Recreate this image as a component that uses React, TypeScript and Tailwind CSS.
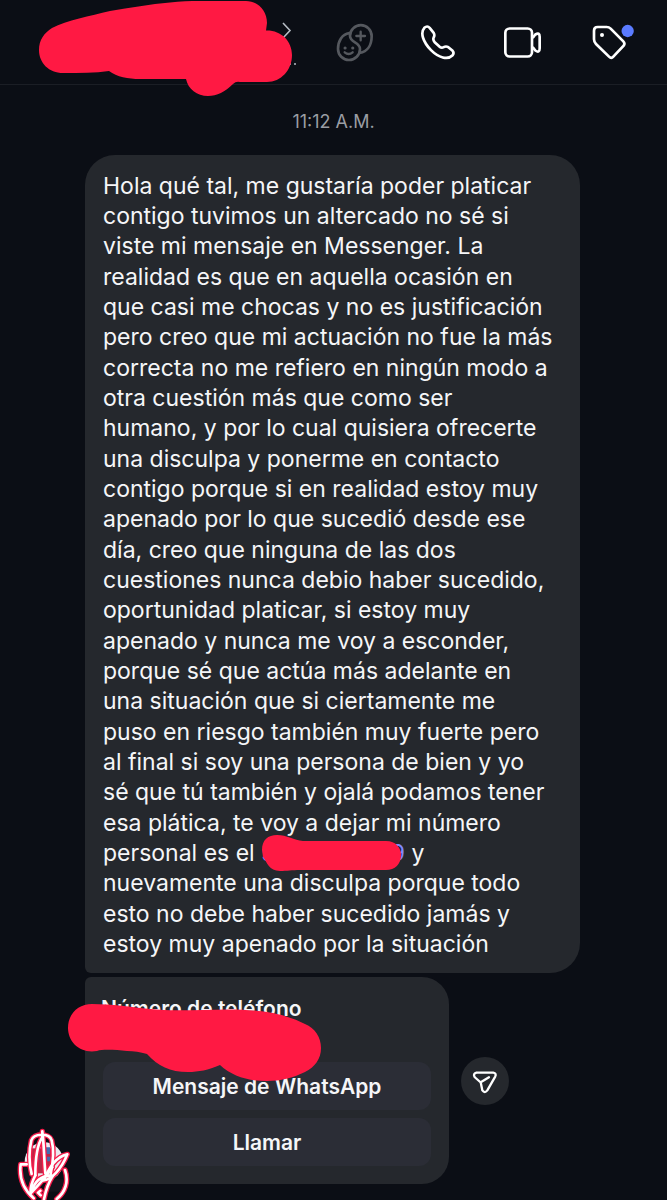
import React from "react";

const messageLines: React.ReactNode[][] = [
  ["Hola qué tal, me gustaría poder platicar", "contigo tuvimos un altercado no sé si", "viste mi mensaje en Messenger. La"],
  ["realidad es que en aquella ocasión en", "que casi me chocas y no es justificación", "pero creo que mi actuación no fue la más"],
  ["correcta no me refiero en ningún modo a", "otra cuestión más que como ser", "humano, y por lo cual quisiera ofrecerte"],
  ["una disculpa y ponerme en contacto", "contigo porque si en realidad estoy muy", "apenado por lo que sucedió desde ese"],
  ["día, creo que ninguna de las dos", "cuestiones nunca debio haber sucedido,", "oportunidad platicar, si estoy muy"],
  ["apenado y nunca me voy a esconder,", "porque sé que actúa más adelante en", "una situación que si ciertamente me"],
  ["puso en riesgo también muy fuerte pero", "al final si soy una persona de bien y yo", "sé que tú también y ojalá podamos tener"],
  ["esa plática, te voy a dejar mi número", <>personal es el <HiddenNumber /> y</>, "nuevamente una disculpa porque todo"],
  ["esto no debe haber sucedido jamás y", "estoy muy apenado por la situación"],
];

function HiddenNumber() {
  return (
    <a href="#numero" aria-label="Número oculto" className="relative inline-flex w-[144px] justify-between text-[#7f88ff]">
      <span>5</span>
      <span>9</span>
      <svg aria-hidden="true" viewBox="261 832 144 38" className="absolute -top-1 left-0 h-[38px] w-[144px] fill-[#ff1943]">
        <path d="M262 848C262 838 268 833 277 833C287 833 294 838 303 839H386C396 839 401 846 401 853C401 862 395 868 386 868H300C292 868 287 869 280 869C269 869 267 860 263 855Z" />
      </svg>
    </a>
  );
}

function Header() {
  return (
    <header className="relative flex h-[85px] items-center justify-end border-b border-[#1b1e25] pr-[33px]">
      <div className="absolute top-0 left-0 h-[97px] w-[300px]">
        <svg aria-hidden="true" viewBox="0 0 300 97" className="h-[97px] w-[300px]">
          <path d="M283 23L290 30.500L283 38" fill="none" stroke="#b6bcc4" strokeWidth="1.600" />
          <circle cx="290" cy="64" r="1" fill="#b6bcc4" />
          <circle cx="295" cy="64" r="1" fill="#b6bcc4" />
          <path
            fill="#ff1943"
            d="M39 50C39 40 44 33 52 28C67 20 90 16 110 11C130 8 150 4 170 2.500C180 1 190 1 200 1H246C258 1 267 11 267 23L266 30.500C281 30 292 41 292 55C292 70 281 82 267 82H240Q236 81 233 84C225 92 217 96 208 96C197 96 188 89 186 79H140C128 79 117 77 109 71C95 73 80 73 63 73C49 73 39 63 39 50Z"
          />
        </svg>
      </div>
      <nav aria-label="Acciones" className="flex items-center gap-[46px]">
        <button aria-label="Stickers" className="flex">
          <svg viewBox="48 68 114 117" className="h-[39px] w-[38px]" fill="none" stroke="#55585e" strokeWidth="8" strokeLinecap="round">
            <path d="M88 98C66 102 54 122 54 146A33 33 0 0 0 120 146C120 124 91 128 90 107A32.500 32.500 0 1 1 155 107C155 135 142 154 119 158" />
            <path d="M122 94V120M109 107H135M74 156Q86 166 98 156" strokeWidth="7" />
            <path d="M75 143H75.500M98 143H98.500" strokeWidth="9" />
          </svg>
        </button>
        <button aria-label="Llamada" className="flex">
          <svg viewBox="296 72 108 110" className="h-[37px] w-[36px]" fill="none" stroke="#fff" strokeWidth="8" strokeLinejoin="round">
            <path d="M309 83Q318 75 325 83L337 98Q341 105 337 112Q334 118 340 126L355 140Q361 144 367 141Q374 137 381 141L393 151Q400 158 393 166C379 180 352 173 329 150C305 125 296 98 309 83Z" />
          </svg>
        </button>
        <button aria-label="Videollamada" className="ml-0.5 flex">
          <svg viewBox="548 72 114 110" className="h-[37px] w-[38px]" fill="none" stroke="#fff" strokeWidth="8" strokeLinejoin="round">
            <rect x="552" y="85" width="80" height="84" rx="13" />
            <path d="M634 113L642 103Q655 95 655 110V144Q655 160 642 151L634 141" />
          </svg>
        </button>
        <button aria-label="Etiqueta" className="ml-1 flex">
          <svg viewBox="816 68 126 114" className="h-[38px] w-[42px]">
            <path d="M822 91Q822 80 833 80H860Q867 80 872 85L910 123Q916 129 911 136L880 169Q874 176 867 169L828 131Q822 125 822 117Z" fill="none" stroke="#fff" strokeWidth="8" />
            <circle cx="846" cy="104" r="6" fill="#fff" />
            <circle cx="923" cy="92" r="18.500" fill="#5b7bff" />
          </svg>
        </button>
      </nav>
    </header>
  );
}

function Avatar() {
  return (
    <svg role="img" aria-label="Foto de perfil" viewBox="45 45 171 225" className="-mb-4 ml-[15px] h-[75px] w-[57px]" fill="none" strokeLinecap="round" strokeLinejoin="round">
      <circle cx="132" cy="155" r="58" fill="#e9eaf0" />
      <path d="M92 115H160V190H92Z" fill="#b72847" />
      <path d="M132 112H150V132H132ZM140 140H156V154H140ZM108 116H118V150H108Z" fill="#426cae" />
      <path d="M72 165H92V245H72ZM150 208H190V245H140Z" fill="#14151d" />
      {[
        { color: "#f51b4a", width: 16 },
        { color: "#fff", width: 8 },
      ].map(({ color, width }) => (
        <g key={color} stroke={color} strokeWidth={width}>
          <path d="M127 64V82C111 105 106 145 106 196M127 66C132 98 132 146 136 190M95 192C86 162 87 120 94 91C101 69 148 68 155 91C162 116 160 155 151 198" />
          <path d="M80 163H62C57 202 70 238 101 265M195 180C207 214 196 247 170 267M202 133C166 140 149 173 130 211C153 211 184 178 202 133Z" />
          <path d="M106 196C96 215 90 232 92 250C112 230 133 206 157 172M94 246C106 207 131 195 158 198C146 217 137 242 132 268M121 242L114 248L122 256" />
        </g>
      ))}
    </svg>
  );
}

function ContactCard() {
  return (
    <section className="relative w-full max-w-[364px] rounded-[27px] rounded-tl-[6px] bg-[#25282d] px-[18px] pt-[17px] pb-[18px]">
      <h2 className="-ml-0.5 text-[21px] leading-[30px] font-semibold">Número de teléfono</h2>
      <div className="mt-[38px] flex flex-col gap-2">
        <button className="h-12 rounded-[12px] bg-[#2b2d36] pt-0.5 text-[21px] font-semibold">Mensaje de WhatsApp</button>
        <button className="h-12 rounded-[12px] bg-[#2b2d36] pt-0.5 text-[21px] font-semibold">Llamar</button>
      </div>
      <svg aria-hidden="true" viewBox="67 1003 256 79" className="absolute top-[26px] -left-[18px] h-[79px] w-[256px] fill-[#ff1943]">
        <path d="M68 1028C68 1014 78 1004 92 1004C112 1004 131 1007 150 1009C168 1011 186 1010 203 1010C228 1009 252 1009 273 1013C287 1016 297 1020 305 1024C315 1028 321 1037 321 1048C321 1059 315 1067 305 1072C293 1078 280 1081 267 1081C247 1081 232 1076 220 1065C208 1070 199 1072 188 1072C170 1072 158 1066 147 1054C140 1052 134 1051 127 1051C116 1050 103 1049 97 1051C80 1054 68 1042 68 1028Z" />
      </svg>
    </section>
  );
}

export default function App() {
  return (
    <div className="min-h-screen overflow-hidden bg-[#0b0e15] font-['Inter',sans-serif] text-[#f5f6f8]">
      <Header />
      <main className="pb-4">
        <time className="block pt-6 text-center text-[18px] leading-[26px] text-[#9a9da3]">11:12 A.M.</time>
        <article className="mt-5 mr-[87px] ml-[85px] flex flex-col gap-px rounded-[30px] rounded-bl-[6px] bg-[#25282d] px-[18px] pt-4 pb-3.5 text-[23px] leading-[30px] whitespace-nowrap">
          {messageLines.map((lines, group) => (
            <p key={group}>
              {lines.map((line, index) => (
                <span key={index} className="block">{line}</span>
              ))}
            </p>
          ))}
        </article>
        <div className="mt-1 flex">
          <div className="flex w-[85px] shrink-0 items-end">
            <Avatar />
          </div>
          <ContactCard />
          <button aria-label="Compartir" className="ml-3 flex size-12 shrink-0 items-center justify-center self-center rounded-full bg-[#25282d] pt-1">
            <svg viewBox="337 334 78 76" className="h-[25px] w-[26px]" fill="none" stroke="#fff" strokeWidth="7" strokeLinecap="round" strokeLinejoin="round">
              <path d="M350 342H401Q412 344 407 354L383 396Q375 406 368 396L363 372L345 356Q338 346 350 342ZM363 371L388 356" />
            </svg>
          </button>
        </div>
      </main>
    </div>
  );
}
